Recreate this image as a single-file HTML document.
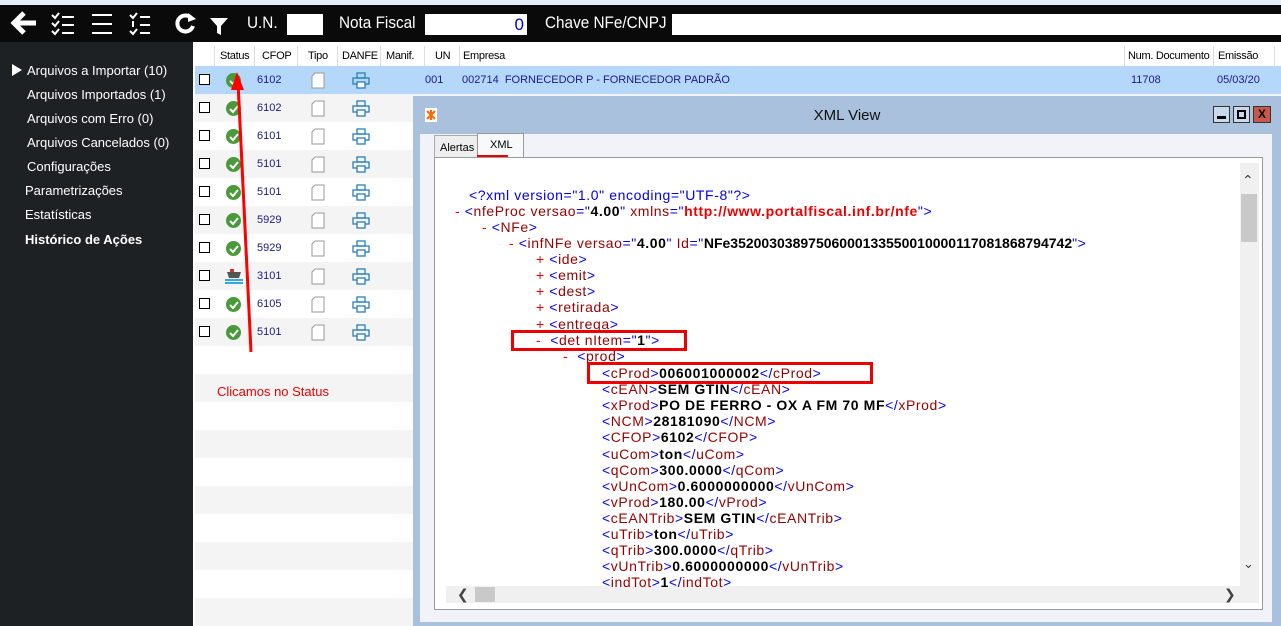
<!DOCTYPE html>
<html><head><meta charset="utf-8"><style>
*{margin:0;padding:0;box-sizing:border-box}
body{width:1281px;height:626px;overflow:hidden;background:#1e2124;font-family:"Liberation Sans","DejaVu Sans",sans-serif;position:relative}
.a{position:absolute}
#top{left:0;top:0;width:1281px;height:5px;background:#e6ecf6}
#bar{left:0;top:5px;width:1281px;height:37px;background:#0a0a0a}
.lbl{color:#fff;font-size:17px;top:13px;transform:scaleX(.9);transform-origin:left}
.inp{background:#fff;top:14px;height:21px}
.side{color:#fff;font-size:13px;left:27px}
#grid{left:193px;top:42px;width:1088px;height:584px;background:#fff}
.hd{top:46px;height:20px;font-size:11px;color:#000;line-height:20px;background:#fff;border-right:1px solid #ddd;white-space:nowrap;overflow:hidden;letter-spacing:-.3px}
.row{left:195px;width:1086px;height:28px}
.cell{font-size:11px;color:#1a1a8a;line-height:28px;white-space:nowrap}
.cb{width:11px;height:11px;border:1px solid #000;background:#fff}
.ok{width:15px;height:15px;border-radius:50%;background:#4a9a3a}
#win{left:413px;top:96px;width:868px;height:530px;background:#a9c1dc}
#xml{font-size:14px;line-height:16.1px;white-space:nowrap;letter-spacing:.6px}
.t{color:#0000ee}.n{color:#990000}.v{color:#000;font-weight:bold}.r{color:#e00}
</style></head><body>
<div class="a" id="top"></div>
<div class="a" id="bar"></div>
<svg class="a" style="left:10px;top:10px" width="230" height="28" viewBox="0 0 230 28">
<path d="M4 13h22M14 3L4 13l10 10" stroke="#fff" stroke-width="5" fill="none"/>
<g stroke="#fff" stroke-width="2" fill="none"><path d="M42 5l3 3 4-5M42 13l3 3 4-5M42 21l3 3 4-5M52 7h12M52 15h12M52 23h12"/>
<path d="M82 5h20M82 14h20M82 23h20"/>
<path d="M120 5l3 3 4-5M120 21l3 3 4-5M130 7h10M130 15h10M130 23h10M123 11v6"/>
<path d="M182 9a8 8 0 1 0 1 7" stroke-width="4"/></g>
<path d="M178 3l8 6-8 3z" fill="#fff"/>
<path d="M200 8h18l-7 8v9l-4-2v-7z" fill="#fff"/>
</svg>
<div class="a lbl" style="left:247px">U.N.</div>
<div class="a inp" style="left:287px;width:36px"></div>
<div class="a lbl" style="left:339px">Nota Fiscal</div>
<div class="a inp" style="left:425px;width:102px;color:#00c;font-size:17px;text-align:right;padding-right:3px;line-height:21px">0</div>
<div class="a lbl" style="left:545px">Chave NFe/CNPJ</div>
<div class="a inp" style="left:672px;width:609px"></div>

<div class="a" style="left:12px;top:64px;width:0;height:0;border-left:10px solid #fff;border-top:6px solid transparent;border-bottom:6px solid transparent"></div>
<div class="a side" style="top:63px">Arquivos a Importar (10)</div>
<div class="a side" style="top:87px">Arquivos Importados (1)</div>
<div class="a side" style="top:111px">Arquivos com Erro (0)</div>
<div class="a side" style="top:135px">Arquivos Cancelados (0)</div>
<div class="a side" style="top:159px">Configurações</div>
<div class="a side" style="top:183px;left:25px">Parametrizações</div>
<div class="a side" style="top:207px;left:25px">Estatísticas</div>
<div class="a side" style="top:232px;left:25px;font-weight:bold">Histórico de Ações</div>

<div class="a" id="grid"></div>
<div class="a hd" style="left:195px;width:20px"></div>
<div class="a hd" style="left:216px;width:39px;padding-left:4px">Status</div>
<div class="a hd" style="left:256px;width:42px;padding-left:6px">CFOP</div>
<div class="a hd" style="left:299px;width:39px;padding-left:9px">Tipo</div>
<div class="a hd" style="left:339px;width:42px;padding-left:3px">DANFE</div>
<div class="a hd" style="left:382px;width:43px;padding-left:4px">Manif.</div>
<div class="a hd" style="left:426px;width:34px;padding-left:9px">UN</div>
<div class="a hd" style="left:461px;width:664px;padding-left:2px">Empresa</div>
<div class="a hd" style="left:1126px;width:88px;padding-left:2px">Num. Documento</div>
<div class="a hd" style="left:1215px;width:60px;padding-left:3px">Emissão</div>

<div id="rows"></div>
<script>
var c=['6102','6102','6101','5101','5101','5929','5929','3101','6105','5101'],h='';
for(var i=0;i<20;i++){var y=66+i*28,bg=i==0?'#b4d7fa':(i%2?'#f4f4f4':'#fff');
h+='<div class="a row" style="top:'+y+'px;background:'+bg+'"></div>';
if(i<10){h+='<div class="a cb" style="left:199px;top:'+(y+8)+'px"></div>';
if(i==7)h+='<svg class="a" style="left:225px;top:'+(y+6)+'px" width="18" height="16"><rect x="5" y="1" width="4" height="3" fill="#c33"/><path d="M2 4h14l-2 6H4z" fill="#555"/><path d="M0 12h18M0 15h18" stroke="#3ad" stroke-width="2"/></svg>';
else h+='<div class="a ok" style="left:226px;top:'+(y+7)+'px"></div><svg class="a" style="left:226px;top:'+(y+7)+'px" width="15" height="15"><path d="M4 8l3 3 5-6" stroke="#fff" stroke-width="2" fill="none"/></svg>';
h+='<div class="a cell" style="left:257px;top:'+y+'px">'+c[i]+'</div>';
h+='<svg class="a" style="left:311px;top:'+(y+6)+'px" width="14" height="17"><path d="M1 4L4 1h9v15H1z" fill="#fff" stroke="#999"/></svg>';
h+='<svg class="a" style="left:352px;top:'+(y+6)+'px" width="18" height="17"><g fill="none" stroke="#2a7fb8" stroke-width="1.3"><rect x="5" y="1" width="8" height="5"/><rect x="1" y="6" width="16" height="6"/><rect x="5" y="10" width="8" height="6" fill="#fff"/></g></svg>';}
}
h+='<div class="a cell" style="left:425px;top:66px">001</div><div class="a cell" style="left:462px;top:66px">002714&nbsp;&nbsp;FORNECEDOR P - FORNECEDOR PADRÃO</div><div class="a cell" style="left:1131px;top:66px">11708</div><div class="a cell" style="left:1217px;top:66px">05/03/20</div>';
document.getElementById('rows').innerHTML=h;
</script>
<svg class="a" style="left:230px;top:70px" width="30" height="285"><path d="M21 282L8 12" stroke="#f00" stroke-width="3"/><path d="M7 2l-6 18h13z" fill="#f00"/></svg>
<div class="a" style="left:217px;top:384px;font-size:13px;color:#e00">Clicamos no Status</div>

<div class="a" id="win">
<svg class="a" style="left:12px;top:12px" width="12" height="14"><rect width="12" height="14" fill="#fff"/><path d="M2 3l8 8M10 3l-8 8M6 2v10" stroke="#f60" stroke-width="2"/></svg>
<div class="a" style="left:0;width:868px;top:11px;text-align:center;font-size:15px;color:#111">XML View</div>
<div class="a" style="left:800px;top:10px;width:17px;height:17px;border:1px solid #333;background:#c9d8ea"><div class="a" style="left:3px;top:9px;width:9px;height:3px;background:#000"></div></div>
<div class="a" style="left:820px;top:10px;width:17px;height:17px;border:1px solid #333;background:#c9d8ea"><div class="a" style="left:3px;top:3px;width:9px;height:9px;border:2px solid #000"></div></div>
<div class="a" style="left:840px;top:10px;width:18px;height:17px;border:1px solid #333;background:#c8584a;color:#000;font-size:12px;font-weight:bold;text-align:center;line-height:15px">X</div>
<div class="a" style="left:7px;top:38px;width:852px;height:488px;background:#f1f3f8"></div>
<div class="a" style="left:21px;top:39px;width:44px;height:23px;border:1px solid #aaa;border-bottom:none;background:#eee;font-size:11px;padding:6px 0 0 5px">Alertas</div>
<div class="a" style="left:64px;top:37px;width:47px;height:26px;border:1px solid #999;border-bottom:none;background:#f8f9fb;font-size:11px;padding:5px 0 0 12px">XML</div>
<div class="a" style="left:64px;top:59px;width:31px;height:2px;background:#e00"></div>
<div class="a" style="left:21px;top:61px;width:829px;height:453px;border:1px solid #999;background:#fff"></div>
<div class="a" style="left:827px;top:67px;width:19px;height:423px;background:#f0f0f0"></div>
<div class="a" style="left:828px;top:98px;width:16px;height:48px;background:#c9c9c9"></div>
<div class="a" style="left:829px;top:76px;font-size:14px;color:#444">&#8963;</div>
<div class="a" style="left:830px;top:460px;font-size:13px;color:#444">&#8964;</div>
<div class="a" style="left:33px;top:490px;width:813px;height:17px;background:#f0f0f0"></div>
<div class="a" style="left:62px;top:491px;width:20px;height:15px;background:#c9c9c9"></div>
<div class="a" style="left:44px;top:490px;font-size:14px;color:#444">&#10094;</div>
<div class="a" style="left:811px;top:490px;font-size:14px;color:#444">&#10095;</div>
</div>

<div class="a" id="xml" style="left:0;top:0">
<div class="a" style="left:469px;top:187px"><span class="t">&lt;?xml version="1.0" encoding="UTF-8"?&gt;</span></div>
<div class="a" style="left:455px;top:203px"><span class="r">-</span>&nbsp;<span class="t">&lt;</span><span class="n">nfeProc versao</span><span class="t">="</span><span class="v">4.00</span><span class="t">"</span> <span class="n">xmlns</span><span class="t">="</span><b class="r">http://www.portalfiscal.inf.br/nfe</b><span class="t">"&gt;</span></div>
<div class="a" style="left:482px;top:219px"><span class="r">-</span>&nbsp;<span class="t">&lt;</span><span class="n">NFe</span><span class="t">&gt;</span></div>
<div class="a" style="left:509px;top:235px"><span class="r">-</span>&nbsp;<span class="t">&lt;</span><span class="n">infNFe versao</span><span class="t">="</span><span class="v">4.00</span><span class="t">"</span> <span class="n">Id</span><span class="t">="</span><span class="v" style="letter-spacing:0">NFe35200303897506000133550010000117081868794742</span><span class="t">"&gt;</span></div>
<div class="a" style="left:536px;top:251px"><span class="r">+</span> <span class="t">&lt;</span><span class="n">ide</span><span class="t">&gt;</span></div>
<div class="a" style="left:536px;top:267px"><span class="r">+</span> <span class="t">&lt;</span><span class="n">emit</span><span class="t">&gt;</span></div>
<div class="a" style="left:536px;top:283px"><span class="r">+</span> <span class="t">&lt;</span><span class="n">dest</span><span class="t">&gt;</span></div>
<div class="a" style="left:536px;top:299px"><span class="r">+</span> <span class="t">&lt;</span><span class="n">retirada</span><span class="t">&gt;</span></div>
<div class="a" style="left:536px;top:316px"><span class="r">+</span> <span class="t">&lt;</span><span class="n">entrega</span><span class="t">&gt;</span></div>
<div class="a" style="left:536px;top:332px"><span class="r">-</span>&nbsp;&nbsp;<span class="t">&lt;</span><span class="n">det nItem</span><span class="t">="</span><span class="v">1</span><span class="t">"&gt;</span></div>
<div class="a" style="left:563px;top:348px"><span class="r">-</span>&nbsp;&nbsp;<span class="t">&lt;</span><span class="n">prod</span><span class="t">&gt;</span></div>
<div id="kids"></div>
</div>
<script>
var k=[['cProd','006001000002'],['cEAN','SEM GTIN'],['xProd','PO DE FERRO - OX A FM 70 MF'],['NCM','28181090'],['CFOP','6102'],['uCom','ton'],['qCom','300.0000'],['vUnCom','0.6000000000'],['vProd','180.00'],['cEANTrib','SEM GTIN'],['uTrib','ton'],['qTrib','300.0000'],['vUnTrib','0.6000000000'],['indTot','1']],s='';
for(var j=0;j<k.length;j++){s+='<div class="a" style="left:602px;top:'+(365+j*16.1)+'px"><span class="t">&lt;</span><span class="n">'+k[j][0]+'</span><span class="t">&gt;</span><span class="v">'+k[j][1]+'</span><span class="t">&lt;/</span><span class="n">'+k[j][0]+'</span><span class="t">&gt;</span></div>';}
document.getElementById('kids').innerHTML=s;
</script>
<div class="a" style="left:511px;top:330px;width:176px;height:21px;border:3px solid #e00"></div>
<div class="a" style="left:587px;top:362px;width:286px;height:22px;border:3px solid #e00"></div>
</body></html>
